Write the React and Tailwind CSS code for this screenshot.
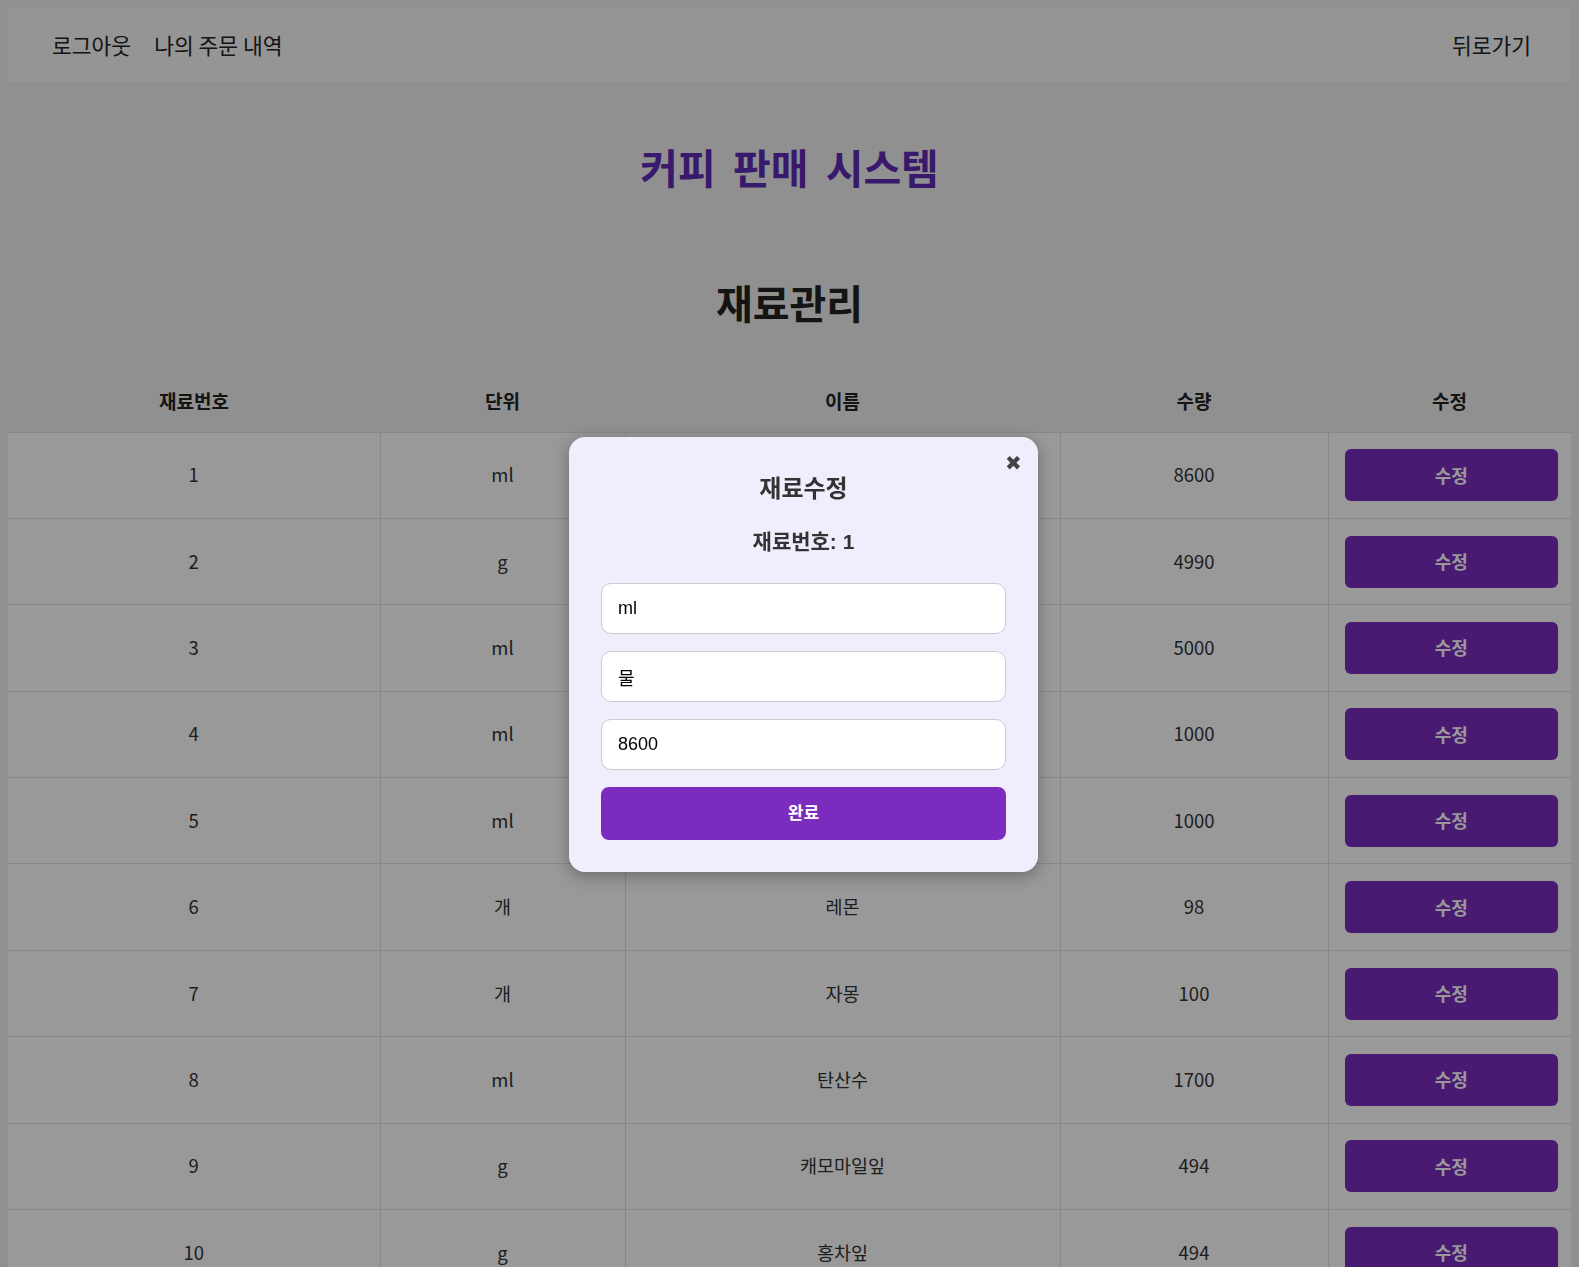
import React from 'react';

const rows = [
  { id: 1, unit: 'ml', name: '물', qty: 8600 },
  { id: 2, unit: 'g', name: '원두', qty: 4990 },
  { id: 3, unit: 'ml', name: '우유', qty: 5000 },
  { id: 4, unit: 'ml', name: '바닐라시럽', qty: 1000 },
  { id: 5, unit: 'ml', name: '카라멜시럽', qty: 1000 },
  { id: 6, unit: '개', name: '레몬', qty: 98 },
  { id: 7, unit: '개', name: '자몽', qty: 100 },
  { id: 8, unit: 'ml', name: '탄산수', qty: 1700 },
  { id: 9, unit: 'g', name: '캐모마일잎', qty: 494 },
  { id: 10, unit: 'g', name: '홍차잎', qty: 494 },
  { id: 11, unit: 'g', name: '녹차잎', qty: 500 },
];

const pageFont = { fontFamily: '"Noto Sans CJK KR", "Noto Sans", sans-serif' };
const modalFont = { fontFamily: '"Liberation Sans", "Noto Sans CJK KR", sans-serif' };

export default function App() {
  return (
    <div className="min-h-screen bg-[#f0f0f0] p-2 text-[#222]" style={pageFont}>
      {/* Header */}
      <div className="h-[74px] bg-[#f8f8f8] flex items-center justify-between pl-[44px] pr-[40px] text-[21.5px] text-[#222]">
        <div className="flex items-center gap-[23px]">
          <span>로그아웃</span>
          <span>나의 주문 내역</span>
        </div>
        <span>뒤로가기</span>
      </div>

      <h1 className="mt-[58px] text-center text-[41px] leading-[52px] font-bold text-[#5f2bb5] [word-spacing:8px]">
        커피 판매 시스템
      </h1>
      <h2 className="mt-[84px] text-center text-[40px] leading-[52px] font-bold text-[#222]">
        재료관리
      </h2>

      {/* Table */}
      <table className="mt-[43px] w-full border-collapse bg-white table-fixed">
        <thead>
          <tr className="bg-[#f0f0f0] h-[61px] text-[19px] font-bold">
            <th className="w-[372px]">재료번호</th>
            <th className="w-[245px]">단위</th>
            <th className="w-[435px]">이름</th>
            <th className="w-[268px]">수량</th>
            <th>수정</th>
          </tr>
        </thead>
        <tbody>
          {rows.map((row) => (
            <tr key={row.id} className="h-[86.4px] text-[18.5px] text-[#333] text-center">
              <td className="border border-[#e2e2e2] border-l-0">{row.id}</td>
              <td className="border border-[#e2e2e2]">{row.unit}</td>
              <td className="border border-[#e2e2e2]">{row.name}</td>
              <td className="border border-[#e2e2e2]">{row.qty}</td>
              <td className="border border-[#e2e2e2] border-r-0 pl-4 pr-[13px]">
                <button className="w-full h-[52px] rounded-md bg-[#7b2cbf] text-white font-bold text-[18px]">
                  수정
                </button>
              </td>
            </tr>
          ))}
        </tbody>
      </table>

      {/* Overlay */}
      <div className="fixed inset-0 bg-black/40" />

      {/* Modal */}
      <div
        className="fixed left-[569px] top-[437px] w-[469px] rounded-2xl bg-[#f0eefd] px-8 pt-[36px] pb-8 shadow-[0_4px_16px_rgba(0,0,0,0.3)]"
        style={modalFont}
      >
        <button className="absolute right-[16px] top-[14px] text-[20px] leading-6 text-[#444]">✖</button>
        <h3 className="text-center text-[24px] leading-[32px] font-bold text-[#333]">재료수정</h3>
        <p className="mt-[23px] text-center text-[21px] leading-[28px] font-bold text-[#333]">재료번호: 1</p>
        <div className="mt-[27px] flex flex-col gap-[17px]">
          <input
            defaultValue="ml"
            className="h-[51px] w-full rounded-[10px] border border-[#cccccc] bg-white px-4 text-[18px] text-black outline-none"
          />
          <input
            defaultValue="물"
            className="h-[51px] w-full rounded-[10px] border border-[#cccccc] bg-white px-4 text-[18px] text-black outline-none"
          />
          <input
            defaultValue="8600"
            className="h-[51px] w-full rounded-[10px] border border-[#cccccc] bg-white px-4 text-[18px] text-black outline-none"
          />
          <button className="h-[53px] w-full rounded-lg bg-[#7b2cbf] text-white font-bold text-[17px]">
            완료
          </button>
        </div>
      </div>
    </div>
  );
}
